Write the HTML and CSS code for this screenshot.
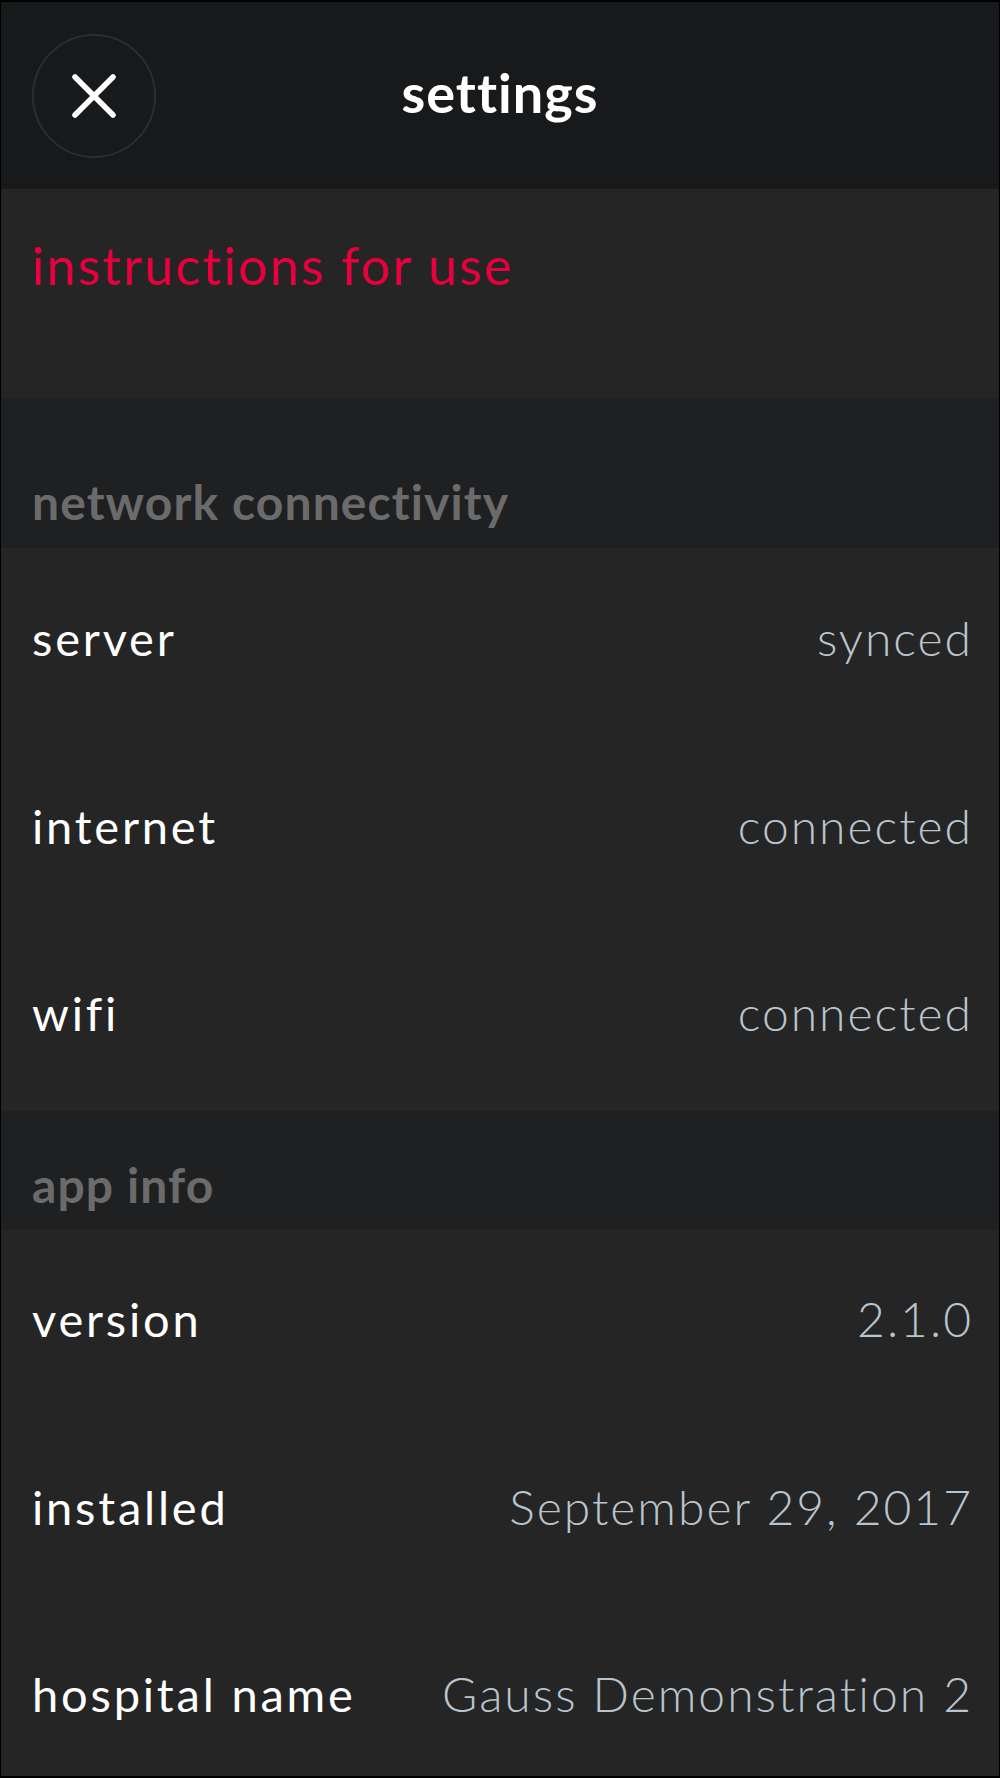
FILE: index.html
```html
<!DOCTYPE html>
<html lang="en">
<head>
<meta charset="utf-8">
<title>settings</title>
<link rel="stylesheet" href="styles.css">
</head>
<body>
<div class="screen">
  <header class="topbar">
    <button class="close" aria-label="close">
      <svg class="close-icon" viewBox="0 0 44 44" width="44" height="44">
        <path d="M3 3 L41 41 M41 3 L3 41" />
      </svg>
    </button>
    <h1 class="title">settings</h1>
    <div class="spacer"></div>
  </header>

  <div class="link-row"><a class="link" href="#">instructions for use</a></div>

  <div class="section-head section-head--net">network connectivity</div>
  <div class="row"><span class="label">server</span><span class="value">synced</span></div>
  <div class="row"><span class="label">internet</span><span class="value">connected</span></div>
  <div class="row"><span class="label">wifi</span><span class="value">connected</span></div>

  <div class="section-head section-head--app">app info</div>
  <div class="row"><span class="label">version</span><span class="value">2.1.0</span></div>
  <div class="row"><span class="label">installed</span><span class="value">September 29, 2017</span></div>
  <div class="row"><span class="label">hospital name</span><span class="value">Gauss Demonstration 2</span></div>
</div>
</body>
</html>
```

FILE: styles.css
```css
* { box-sizing: border-box; }
html, body { margin: 0; padding: 0; background: #000; }
body { font-family: Lato, "Noto Sans", sans-serif; }

.screen {
  margin: 2px 1px;
  height: 1774px;
  overflow: hidden;
  background: #252525;
}

.topbar {
  height: 187px;
  background: #18191b;
  display: grid;
  grid-template-columns: 1fr auto 1fr;
  align-items: center;
}
.close {
  justify-self: start;
  margin-left: 31px;
  width: 124px;
  height: 124px;
  border-radius: 50%;
  border: 2px solid #2c2d2f;
  background: transparent;
  display: flex;
  align-items: center;
  justify-content: center;
  padding: 0;
}
.close-icon path {
  stroke: #fff;
  stroke-width: 5.5;
  stroke-linecap: round;
  fill: none;
}
.title {
  margin: 0 0 6px;
  font-size: 54px;
  font-weight: 700;
  color: #fff;
  letter-spacing: 1px;
}

.link-row {
  height: 209px;
  padding: 50px 0 0 31px;
}
.link {
  color: #e8003d;
  font-size: 52px;
  line-height: 52px;
  text-decoration: none;
  letter-spacing: 2.2px;
}

.section-head {
  background: #1f2022;
  color: #6b6b6b;
  font-weight: 700;
  font-size: 48px;
  line-height: 48px;
  padding-left: 31px;
  letter-spacing: 1.1px;
}
.section-head--net { height: 150px; padding-top: 80px; }
.section-head--app { height: 118px; padding-top: 50px; }

.row {
  height: 187.7px;
  display: flex;
  justify-content: space-between;
  align-items: baseline;
  padding: 66px 26px 0 31px;
  line-height: 48px;
}
.label {
  color: #fff;
  font-size: 47px;
  letter-spacing: 2.8px;
}
.value {
  color: #b8c4ce;
  font-size: 48px;
  font-weight: 300;
  letter-spacing: 2px;
}
```
